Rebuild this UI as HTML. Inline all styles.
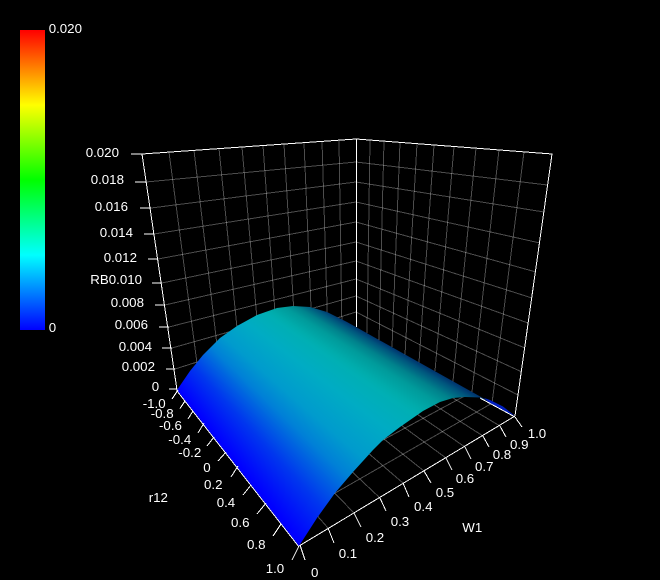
<!DOCTYPE html>
<html>
<head>
<meta charset="utf-8">
<style>
html,body{margin:0;padding:0;background:#000;}
#wrap{position:relative;width:660px;height:580px;background:#000;overflow:hidden;}
svg{position:absolute;left:0;top:0;}
#bar{position:absolute;left:20px;top:30px;width:25px;height:300px;background:linear-gradient(to bottom,#f00 0%,#ff0 25%,#0f0 50%,#0ff 75%,#00f 100%);}
#surf{position:absolute;left:0;top:0;width:660px;height:580px;
background:conic-gradient(from 0deg at -55px 95px,rgb(0,50,110) 119.4deg,rgb(0,85,125) 120deg,rgb(0,130,140) 121deg,rgb(0,155,155) 122deg,rgb(0,172,172) 123.5deg,rgb(0,175,180) 124.2deg,rgb(0,172,195) 127deg,rgb(0,155,205) 131deg,rgb(0,128,215) 133.5deg,rgb(0,55,238) 137.5deg,rgb(0,0,255) 141.5deg);
clip-path:polygon(177px 390px,190px 371px,203px 355px,220px 338px,237px 326px,257px 315px,277px 308px,293px 306px,310px 307px,327px 312px,347px 322px,515px 416px,495px 405px,480px 397.5px,465px 397px,453px 398px,440px 402px,423px 411px,400px 427px,383px 440px,373px 450px,353px 472px,335px 493px,317px 518px,299px 546px);}
text{font-family:"Liberation Sans",sans-serif;font-size:13.3px;fill:#fff;}
</style>
</head>
<body>
<div id="wrap">
<svg width="660" height="580" viewBox="0 0 660 580">
<g stroke="rgba(255,255,255,.3)" stroke-width="1" fill="none" shape-rendering="crispEdges">
<path d="M146 182L356 162M151 208L356 182M154 234L356 202M158 259L356 222M162 283L356 242M165 305L356 261M169 327L356 279M172 348L356 296M175 369L356 312"/>
<path d="M356 162L547.3 185M356 182L544 212M356 202L540 243M356 222L536 272M356 242L532 298M356 261L528 323M356 279L525 348M356 296L522 372M356 312L518 395"/>
<path d="M169 152.1L199.5 382M194 150.4L220.5 374.7M219 148.6L241 367.5M242 147L260.6 360.6M263 145.5L278 354.4M284 144L296 348.1M304 142.6L312.5 342.3M322 141.4L328 336.9M339 140.2L342 331.9"/>
<path d="M370 140L367 333.2M384 141L379 339.9M400 142.4L392 347.2M417 143.7L405 354.4M434 145L419 362.3M454 146.5L435 371.2M476 148.2L453 381.3M499 150L472 392M524 151.9L492 403.2"/>
<path d="M185 401L367 333.2M193 411L379 339.9M204 423L392 347.2M214 437L405 354.4M226 452L419 362.3M238 466L435 371.2M251 485L453 381.3M266 503L472 392M281 524L492 403.2"/>
<path d="M328 528L199.5 382M354 513L220.5 374.7M380 498L241 367.5M403 483L260.6 360.6M424 471L278 354.4M446 458L296 348.1M465 447L312.5 342.3M483 436L328 336.9M500 426L342 331.9"/>
</g>
<g stroke="#fff" stroke-width="1" fill="none" shape-rendering="crispEdges">
<path d="M142 154L356 139L552 154L515 416"/>
<path d="M142 154L177 390"/>
<path d="M356.5 139L356.5 327"/>
<path d="M131 154L142 154M135 182L146 182M140 208L151 208M144 234L154 234M148 259L158 259M152 283L162 283M155 305L165 305M159 327L169 327M162 348L172 348M166 369L175 369M169 389L177 389"/>
<path d="M176.6 390.4L298.6 546.4"/>
</g>
</svg>
<div id="bar"></div>
<div id="surf"></div>
<svg width="660" height="580" viewBox="0 0 660 580">
<polygon points="484,398 490,400 503,406.5 515,416 503,410.5 490,403.5" fill="rgb(0,30,190)"/>
<g stroke="#fff" stroke-width="1" fill="none" shape-rendering="crispEdges">
<path d="M299 546L515 416"/>
<path d="M480 398L515 417"/>
<path d="M178 390L172 399M185 401L180 408.5M193 411L188 419M204 423L198 433M214 437L207 446M226 452L218 461M238 466L231 477M251 485L243 495M266 503L257 514M281 524L273 536M299 546L292 560"/>
<path d="M300 545L305 560M328 528L334 543M354 513L361 527M380 498L386 511M403 483L409 497M424 471L431 483M446 458L452 470M465 447L471 459M483 436L489 447M500 426L506 437M515 417L522 427"/>
</g>
<text x="48.7" y="33">0.020</text>
<text x="48.7" y="332">0</text>
<text x="85.7" y="157">0.020</text>
<text x="90.7" y="184">0.018</text>
<text x="94.7" y="211">0.016</text>
<text x="99.7" y="237">0.014</text>
<text x="103.7" y="262">0.012</text>
<text x="90.3" y="284">RB0.010</text>
<text x="110.7" y="307">0.008</text>
<text x="114.7" y="329">0.006</text>
<text x="118.7" y="351">0.004</text>
<text x="121.7" y="371">0.002</text>
<text x="151.7" y="391">0</text>
<text x="142.7" y="408">-1.0</text>
<text x="150.7" y="418">-0.8</text>
<text x="159" y="430">-0.6</text>
<text x="168.3" y="444">-0.4</text>
<text x="178.3" y="457">-0.2</text>
<text x="203.3" y="472">0</text>
<text x="204" y="489">0.2</text>
<text x="216.7" y="507">0.4</text>
<text x="231" y="527">0.6</text>
<text x="247" y="549">0.8</text>
<text x="265.7" y="573">1.0</text>
<text x="148.7" y="502">r12</text>
<text x="311" y="577">0</text>
<text x="338.7" y="558">0.1</text>
<text x="365.7" y="542">0.2</text>
<text x="390.7" y="526">0.3</text>
<text x="414" y="511">0.4</text>
<text x="435.7" y="497">0.5</text>
<text x="455.7" y="483">0.6</text>
<text x="475" y="471">0.7</text>
<text x="492.7" y="459">0.8</text>
<text x="510" y="449">0.9</text>
<text x="527.7" y="438">1.0</text>
<text x="462.3" y="532">W1</text>
</svg>
</div>
</body>
</html>
